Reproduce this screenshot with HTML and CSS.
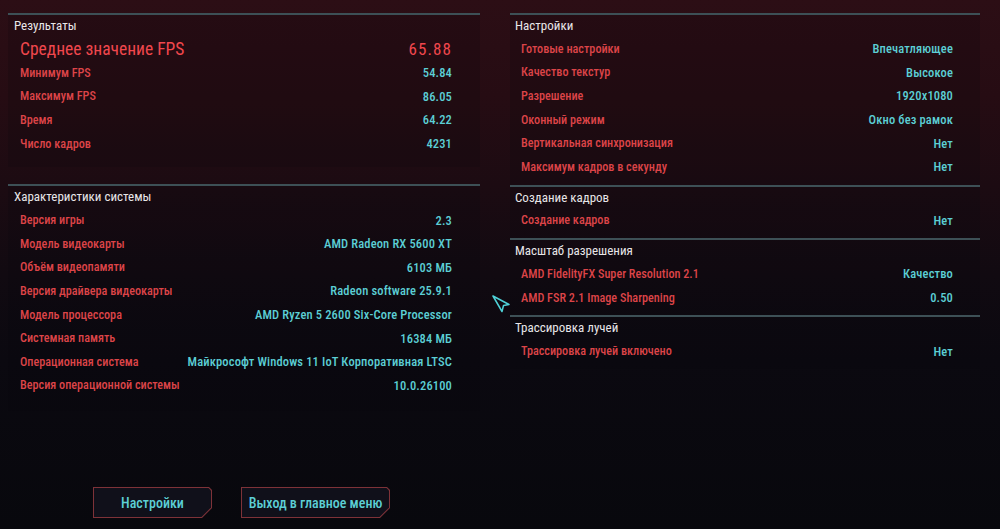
FILE: index.html
```html
<!DOCTYPE html>
<html lang="ru">
<head>
<meta charset="utf-8">
<title>Результаты теста</title>
<link rel="stylesheet" href="styles.css">
</head>
<body>
<div class="screen">
  <div class="columns">
    <div class="col col-left">
      <section class="panel panel-results">
        <div class="panel-title">Результаты</div>
        <div class="row row-big"><span class="label">Среднее значение FPS</span><span class="value">65.88</span></div>
        <div class="row"><span class="label">Минимум FPS</span><span class="value">54.84</span></div>
        <div class="row"><span class="label">Максимум FPS</span><span class="value">86.05</span></div>
        <div class="row"><span class="label">Время</span><span class="value">64.22</span></div>
        <div class="row"><span class="label">Число кадров</span><span class="value">4231</span></div>
      </section>
      <section class="panel panel-system">
        <div class="panel-title">Характеристики системы</div>
        <div class="row"><span class="label">Версия игры</span><span class="value">2.3</span></div>
        <div class="row"><span class="label">Модель видеокарты</span><span class="value">AMD Radeon RX 5600 XT</span></div>
        <div class="row"><span class="label">Объём видеопамяти</span><span class="value">6103 МБ</span></div>
        <div class="row"><span class="label">Версия драйвера видеокарты</span><span class="value">Radeon software 25.9.1</span></div>
        <div class="row"><span class="label">Модель процессора</span><span class="value">AMD Ryzen 5 2600 Six-Core Processor</span></div>
        <div class="row"><span class="label">Системная память</span><span class="value">16384 МБ</span></div>
        <div class="row"><span class="label">Операционная система</span><span class="value">Майкрософт Windows 11 IoT Корпоративная LTSC</span></div>
        <div class="row"><span class="label">Версия операционной системы</span><span class="value">10.0.26100</span></div>
      </section>
    </div>
    <div class="col col-right">
      <section class="panel panel-r">
        <div class="panel-title">Настройки</div>
        <div class="row"><span class="label">Готовые настройки</span><span class="value">Впечатляющее</span></div>
        <div class="row"><span class="label">Качество текстур</span><span class="value">Высокое</span></div>
        <div class="row"><span class="label">Разрешение</span><span class="value">1920x1080</span></div>
        <div class="row"><span class="label">Оконный режим</span><span class="value">Окно без рамок</span></div>
        <div class="row"><span class="label">Вертикальная синхронизация</span><span class="value">Нет</span></div>
        <div class="row"><span class="label">Максимум кадров в секунду</span><span class="value">Нет</span></div>
      </section>
      <section class="panel panel-r">
        <div class="panel-title">Создание кадров</div>
        <div class="row"><span class="label">Создание кадров</span><span class="value">Нет</span></div>
      </section>
      <section class="panel panel-r">
        <div class="panel-title">Масштаб разрешения</div>
        <div class="row"><span class="label">AMD FidelityFX Super Resolution 2.1</span><span class="value">Качество</span></div>
        <div class="row"><span class="label">AMD FSR 2.1 Image Sharpening</span><span class="value">0.50</span></div>
      </section>
      <section class="panel panel-r">
        <div class="panel-title">Трассировка лучей</div>
        <div class="row"><span class="label">Трассировка лучей включено</span><span class="value">Нет</span></div>
      </section>
    </div>
  </div>
  <div class="buttons">
    <div class="btn btn-settings"><span class="btn-inner">Настройки</span></div>
    <div class="btn btn-exit"><span class="btn-inner">Выход в главное меню</span></div>
  </div>
</div>
<svg class="cursor" width="22" height="22" viewBox="0 0 22 22">
  <polygon points="2,2 18,10.5 12.5,11.5 11,17.5" fill="none" stroke="#4fd2d8" stroke-width="1.5" stroke-linejoin="round"/>
</svg>
</body>
</html>
```

FILE: styles.css
```css
html, body {
  margin: 0;
  padding: 0;
}
body {
  width: 1000px;
  height: 529px;
  overflow: hidden;
  position: relative;
  font-family: "Roboto Condensed", Roboto, "Noto Sans", sans-serif;
  background: linear-gradient(180deg, #2c0e15 0%, #260c13 18%, #1c0b12 35%, #110a11 52%, #0b0910 68%, #08080d 100%);
}
.screen {
  height: 529px;
  box-sizing: border-box;
  display: flex;
  flex-direction: column;
  padding: 13px 0 0 8px;
}
.columns {
  display: flex;
  gap: 30px;
}
.col-left {
  width: 472px;
  display: flex;
  flex-direction: column;
}
.col-right {
  width: 470px;
  display: flex;
  flex-direction: column;
}
.panel {
  border-top: 2px solid #3d5056;
  background: rgba(6, 4, 10, 0.16);
}
.panel-results {
  padding-bottom: 12px;
  margin-bottom: 17px;
}
.panel-system {
  padding-bottom: 14px;
}
.panel-r {
  padding-bottom: 6px;
}
.panel-title {
  height: 22px;
  line-height: 22px;
  padding-left: 6px;
  font-size: 13px;
  color: #e8e6e8;
}
.panel-r .panel-title {
  padding-left: 5px;
}
.row {
  height: 23.6px;
  display: flex;
  align-items: center;
  justify-content: space-between;
  padding: 0 28px 0 12px;
  font-size: 12.5px;
  font-weight: 500;
}
.panel-r .row {
  padding: 0 27px 0 11px;
}
.row-big {
  height: 24px;
}
.label {
  color: #dc4448;
  font-size: 12.2px;
}
.value {
  color: #5ccfd5;
  letter-spacing: 0.15px;
}
.row-big .label {
  font-size: 17.5px;
  font-weight: 400;
  color: #f0474d;
}
.row-big .value {
  font-size: 17px;
  font-weight: 400;
  color: #f0474d;
  letter-spacing: 1.1px;
}
.buttons {
  margin-top: auto;
  display: flex;
  gap: 29px;
  padding: 0 0 11px 85px;
}
.btn {
  height: 31px;
  padding: 1px;
  box-sizing: border-box;
  background: #7e3238;
  clip-path: polygon(0 0, calc(100% - 3px) 0, 100% 3px, 100% calc(100% - 10px), calc(100% - 10px) 100%, 0 100%);
  display: flex;
}
.btn-inner {
  flex: 1;
  display: flex;
  align-items: center;
  justify-content: center;
  background: #10101a;
  color: #5ccfd5;
  font-size: 14px;
  font-weight: 500;
  clip-path: polygon(0 0, calc(100% - 2.5px) 0, 100% 2.5px, 100% calc(100% - 9.5px), calc(100% - 9.5px) 100%, 0 100%);
}
.btn-settings {
  width: 119px;
}
.btn-exit {
  width: 149px;
}
.cursor {
  position: absolute;
  left: 491px;
  top: 294px;
}
```
